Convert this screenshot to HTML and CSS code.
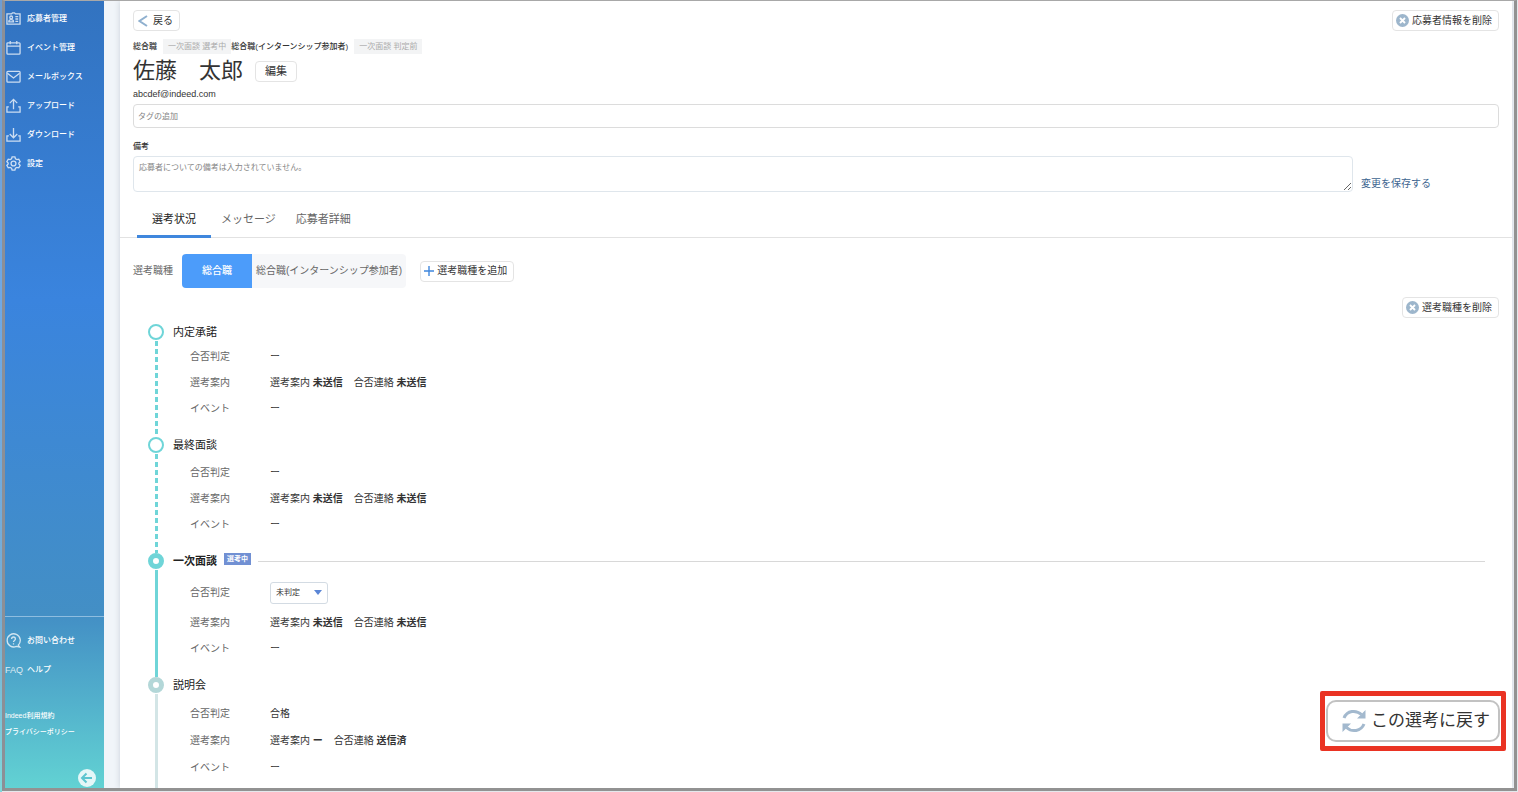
FILE: index.html
```html
<!DOCTYPE html>
<html lang="ja">
<head>
    <meta charset="UTF-8">
    <title>応募者管理</title>
    <link rel="stylesheet" href="styles.css">
</head>
<body>
<div class="app">
    <nav class="sidebar">
        <ul class="menu">
            <li><a href="#">
                <svg class="icon" viewBox="0 0 16 16"><path d="M1 3h5l1-1h2l1 1h5v11H1z"/><circle cx="5.5" cy="6.8" r="1.5"/><path d="M3 11.5c0-3 5-3 5 0zM10 6h3M10 8.5h3M10 11h3"/></svg>
                応募者管理</a></li>
            <li><a href="#">
                <svg class="icon" viewBox="0 0 16 16"><rect x="1" y="3" width="14" height="12" rx="1"/><path d="M1 6.5h14M4.500 1v3.500M11.500 1v3.500"/></svg>
                イベント管理</a></li>
            <li><a href="#">
                <svg class="icon" viewBox="0 0 16 16"><rect x="1" y="2.500" width="14" height="11.500" rx="1"/><path d="M1.500 4.500L8 9.500l6.500-5"/></svg>
                メールボックス</a></li>
            <li><a href="#">
                <svg class="icon" viewBox="0 0 16 16"><path d="M8 12V2M4 5.500L8 1.500l4 4M3 9.500H1V15h14V9.500h-2"/></svg>
                アップロード</a></li>
            <li><a href="#">
                <svg class="icon" viewBox="0 0 16 16"><path d="M8 1v10M4 7.500l4 4 4-4M3 9.500H1V15h14V9.500h-2"/></svg>
                ダウンロード</a></li>
            <li><a href="#">
                <svg class="icon" viewBox="0 0 16 16"><path d="M6.500 1h3l.6 2 1.500.9 2-.5 1.500 2.600L13.700 7.500v1l1.400 1.500-1.500 2.600-2-.5-1.500.9-.6 2h-3l-.6-2-1.500-.9-2 .5L.9 10l1.400-1.500v-1L.9 6l1.500-2.600 2 .5L5.900 3z"/><circle cx="8" cy="8" r="2.600"/></svg>
                設定</a></li>
        </ul>
        <ul class="menu menu_sub">
            <li><a href="#">
                <svg class="icon" viewBox="0 0 16 16"><path d="M13 13a7 7 0 1 0-2 1.300l3.500.7z"/><path d="M6 6.300c0-2.700 4-2.700 4 0C10 8 8 7.800 8 9.700M8 11v1.300"/></svg>
                お問い合わせ</a></li>
            <li><a href="#"><span class="faq">FAQ</span>ヘルプ</a></li>
        </ul>
        <div class="terms">
            <a href="#">Indeed利用規約</a>
            <a href="#">プライバシーポリシー</a>
        </div>
        <button class="fold" type="button" aria-label="メニューを閉じる">
            <svg viewBox="0 0 18 18"><circle cx="9" cy="9" r="9"/><path d="M14 9H4.500M8.500 4.500L4 9l4.500 4.500"/></svg>
        </button>
    </nav>

    <main class="panel">
        <header class="profile">
            <div class="bar">
                <button class="btn" type="button">
                    <svg class="icon_back" viewBox="0 0 10 12"><path d="M9 1L1.500 6 9 11"/></svg>戻る
                </button>
                <button class="btn" type="button">
                    <svg class="icon_del" viewBox="0 0 14 14"><circle cx="7" cy="7" r="7"/><path d="M4.300 4.300l5.400 5.400M9.700 4.300L4.300 9.700"/></svg>応募者情報を削除
                </button>
            </div>
            <div class="jobs">
                <span>総合職</span><span class="state">一次面談 選考中</span><span>総合職(インターンシップ参加者)</span><span class="state">一次面談 判定前</span>
            </div>
            <div class="name">
                <h1>佐藤　太郎</h1>
                <button class="btn btn_edit" type="button">編集</button>
            </div>
            <p class="mail">abcdef@indeed.com</p>
            <input class="tag" type="text" placeholder="タグの追加" aria-label="タグの追加">
            <label class="memo_label" for="memo">備考</label>
            <div class="memo">
                <textarea id="memo" placeholder="応募者についての備考は入力されていません。"></textarea>
                <a href="#">変更を保存する</a>
            </div>
        </header>

        <div class="tabs">
            <a class="on" href="#">選考状況</a>
            <a href="#">メッセージ</a>
            <a href="#">応募者詳細</a>
        </div>

        <div class="kinds">
            <span class="kinds_label">選考職種</span>
            <div class="seg">
                <button class="on" type="button">総合職</button>
                <button type="button">総合職(インターンシップ参加者)</button>
            </div>
            <button class="btn" type="button">
                <svg class="icon_add" viewBox="0 0 10 10"><path d="M5 0v10M0 5h10"/></svg>選考職種を追加
            </button>
        </div>
        <div class="bar bar_del">
            <button class="btn" type="button">
                <svg class="icon_del" viewBox="0 0 14 14"><circle cx="7" cy="7" r="7"/><path d="M4.300 4.300l5.400 5.400M9.700 4.300L4.300 9.700"/></svg>選考職種を削除
            </button>
        </div>

        <ol class="steps">
            <li class="step step_first">
                <div class="track"><i class="dot"></i><i class="line"></i></div>
                <div class="step_body">
                    <h2>内定承諾</h2>
                    <dl>
                        <dt>合否判定</dt><dd>ー</dd>
                        <dt>選考案内</dt><dd><span>選考案内 <b>未送信</b></span><span>合否連絡 <b>未送信</b></span></dd>
                        <dt>イベント</dt><dd>ー</dd>
                    </dl>
                </div>
            </li>
            <li class="step">
                <div class="track"><i class="dot"></i><i class="line"></i></div>
                <div class="step_body">
                    <h2>最終面談</h2>
                    <dl>
                        <dt>合否判定</dt><dd>ー</dd>
                        <dt>選考案内</dt><dd><span>選考案内 <b>未送信</b></span><span>合否連絡 <b>未送信</b></span></dd>
                        <dt>イベント</dt><dd>ー</dd>
                    </dl>
                </div>
            </li>
            <li class="step step_now">
                <div class="track"><i class="dot"></i><i class="line"></i></div>
                <div class="step_body">
                    <h2>一次面談<em>選考中</em></h2>
                    <dl>
                        <dt><label for="judge">合否判定</label></dt>
                        <dd>
                            <div class="select">
                                <select id="judge">
                                    <option>未判定</option>
                                    <option>合格</option>
                                    <option>不合格</option>
                                </select>
                            </div>
                        </dd>
                        <dt>選考案内</dt><dd><span>選考案内 <b>未送信</b></span><span>合否連絡 <b>未送信</b></span></dd>
                        <dt>イベント</dt><dd>ー</dd>
                    </dl>
                </div>
            </li>
            <li class="step step_done">
                <div class="track"><i class="dot"></i><i class="line"></i></div>
                <div class="step_body">
                    <h2>説明会</h2>
                    <dl>
                        <dt>合否判定</dt><dd>合格</dd>
                        <dt>選考案内</dt><dd><span>選考案内 <b>ー</b></span><span>合否連絡 <b>送信済</b></span></dd>
                        <dt>イベント</dt><dd>ー</dd>
                    </dl>
                </div>
                <div class="callout">
                    <button type="button">
                        <svg viewBox="0 0 24 24"><path d="M2 9C5 1.500 14 .5 19.500 5.500M22 15C19 22.500 10 23.500 4.500 18.500"/><path class="head" d="M23.500 1v8.500H15zM.5 23v-8.500H9z"/></svg>この選考に戻す
                    </button>
                </div>
            </li>
        </ol>
    </main>
</div>
</body>
</html>
```
FILE: styles.css
```css
* {
    box-sizing: border-box;
    margin: 0;
    padding: 0;
    list-style: none;
}

body {
    font-family: "Liberation Sans", "Noto Sans CJK JP", sans-serif;
    font-size: 10px;
    line-height: 16px;
    color: #333;
    background: linear-gradient(#6f9dd2, #6fa8e6 38%, #76aed6 78%, #7fd8da) 0 0 / 2px 100% no-repeat, #e4e8ec;
    padding: 0 1px 1px 2px;
}

button, input, select, textarea {
    font: inherit;
    color: inherit;
}

a {
    color: inherit;
    text-decoration: none;
}

svg {
    flex: none;
    fill: none;
    stroke: currentColor;
}

.app {
    display: flex;
    height: calc(100vh - 1px);
    overflow: hidden;
    background: #f1f5f9;
    border: 3px solid #929292;
    border-top: 1px solid #a8a8a8;
    border-left-color: #8c8f96;
}

/* sidebar */
.sidebar {
    display: flex;
    flex-direction: column;
    flex: none;
    width: 99px;
    color: #fff;
    font-size: 8px;
    font-weight: 500;
    background: linear-gradient(#3273c0, #3a84de 38%, #438fc5 78%, #62d2d3);
}

.menu {
    padding-top: 3px;
}

.menu a {
    display: flex;
    align-items: center;
    gap: 6px;
    height: 29px;
}

.icon {
    width: 15px;
    height: 15px;
    margin-left: 1px;
    stroke-width: 1.4;
    opacity: .75;
}

.menu_sub {
    margin-top: auto;
    padding-top: 9px;
    border-top: 1px solid #8ebde0;
}

.faq {
    width: 16px;
    font-size: 9px;
    font-weight: 400;
    opacity: .8;
}

.terms {
    display: flex;
    flex-direction: column;
    padding-top: 24px;
    font-size: 7px;
}

.fold {
    align-self: flex-end;
    width: 18px;
    height: 18px;
    margin: 29px 8px 1px;
    border: none;
    background: none;
}

.fold svg {
    display: block;
    stroke: #5cc5d0;
    stroke-width: 2;
}

.fold circle {
    fill: #e4f7f8;
    stroke: none;
}

/* main panel */
.panel {
    flex: 1;
    min-width: 0;
    margin: 0 2px 0 16px;
    overflow: hidden;
    background: #fff;
    box-shadow: 0 0 6px #c9d0d8;
}

.profile {
    padding: 9px 13px 0;
}

.bar {
    display: flex;
    justify-content: space-between;
}

.btn {
    display: flex;
    align-items: center;
    gap: 3px;
    height: 21px;
    padding: 0 6px 0 3px;
    border: 1px solid #e4e4e4;
    border-radius: 4px;
    background: #fff;
    white-space: nowrap;
}

.icon_back {
    width: 10px;
    height: 12px;
    margin: 0 2px 0 1px;
    stroke: #8fb0cf;
    stroke-width: 2;
}

.icon_del {
    width: 13px;
    height: 13px;
    stroke: #fff;
    stroke-width: 2;
}

.icon_del circle {
    fill: #9db6cc;
    stroke: none;
}

.jobs {
    display: flex;
    align-items: center;
    margin-top: 8px;
    font-size: 8px;
    line-height: 15px;
    font-weight: 500;
}

.state {
    padding: 0 5px;
    margin-left: 6px;
    font-weight: 400;
    color: #aaa;
    background: #f3f4f5;
}

.name {
    display: flex;
    align-items: center;
    gap: 12px;
    margin-top: 1px;
}

.name h1 {
    font-size: 22px;
    line-height: 32px;
    font-weight: 400;
}

.btn_edit {
    padding: 0 9px;
    font-size: 11px;
}

.mail {
    font-size: 9px;
    line-height: 14px;
}

.tag {
    display: block;
    width: 100%;
    height: 24px;
    margin-top: 3px;
    padding: 0 4px;
    font-size: 8px;
    border: 1px solid #dcdcdc;
    border-radius: 4px;
}

.memo_label {
    display: block;
    margin-top: 11px;
    font-size: 8px;
    font-weight: 500;
}

.memo {
    display: flex;
    align-items: flex-end;
    gap: 8px;
}

.memo textarea {
    flex: 1;
    height: 36px;
    margin-top: 1px;
    padding: 3px 5px;
    font-size: 8px;
    border: 1px solid #dfe6ec;
    border-radius: 4px;
}

.memo a {
    margin-right: 68px;
    color: #3d6590;
}

::placeholder {
    color: #858585;
}

.tabs {
    display: flex;
    margin-top: 12px;
    padding-left: 17px;
    border-bottom: 1px solid #e2e2e2;
    font-size: 11px;
    line-height: 31px;
    color: #666;
}

.tabs a {
    padding: 0 10px;
}

.tabs .on {
    padding: 0 15px;
    margin-bottom: -1px;
    border-bottom: 3px solid #3f87dd;
    color: #222;
}

.kinds {
    display: flex;
    align-items: center;
    padding: 16px 13px 0;
}

.kinds_label {
    margin-right: 9px;
    color: #666;
}

.seg {
    display: flex;
    height: 34px;
    margin-right: 14px;
    overflow: hidden;
    border-radius: 4px;
    background: #f6f7f9;
}

.seg button {
    padding: 0 4px;
    border: none;
    background: none;
    color: #666;
}

.seg .on {
    padding: 0 20px;
    background: #4c9cfa;
    color: #fff;
    font-weight: 500;
}

.icon_add {
    width: 10px;
    height: 10px;
    stroke: #3f87dd;
    stroke-width: 1.4;
}

.bar_del {
    justify-content: flex-end;
    padding: 9px 13px 0;
}

/* timeline */
.steps {
    padding: 6px 27px 0 28px;
}

.step {
    display: flex;
    gap: 9px;
    position: relative;
}

.track {
    display: flex;
    flex-direction: column;
    align-items: center;
    width: 16px;
}

.dot {
    width: 16px;
    height: 16px;
    border: 2px solid #6fd5d8;
    border-radius: 50%;
    background: #fff;
}

.line {
    flex: 1;
    width: 3px;
    margin-top: 1px;
    background: repeating-linear-gradient(#6fd5d8 0 5px, transparent 5px 8px);
}

.step_now .dot {
    border-width: 5px;
}

.step_now .line {
    background: #6fd5d8;
}

.step_done .dot {
    border-width: 5px;
    border-color: #b3d7d8;
}

.step_done .line {
    background: #d3e5e6;
}

.step_body {
    flex: 1;
    padding-bottom: 15px;
}

.step h2 {
    display: flex;
    align-items: center;
    font-size: 11px;
    line-height: 16px;
    font-weight: 400;
    color: #222;
}

.step_now h2 {
    font-weight: 700;
}

.step_now h2::after {
    content: "";
    flex: 1;
    height: 1px;
    background: #d8d8d8;
}

.step em {
    align-self: flex-start;
    margin: 0 7px;
    padding: 0 3px;
    font-size: 7px;
    line-height: 12px;
    font-style: normal;
    color: #fff;
    background: #7190d3;
}

.step dl {
    display: grid;
    grid-template-columns: 80px 1fr;
    grid-auto-rows: minmax(26px, auto);
    align-items: center;
    padding: 7px 0 0 17px;
}

.step_first dl {
    padding-top: 4px;
}

.step_done dl {
    grid-auto-rows: minmax(27px, auto);
}

.step dt {
    color: #666;
}

.step dd {
    display: flex;
    gap: 11px;
}

.select {
    position: relative;
    margin: 6px 0;
}

.select select {
    display: block;
    width: 58px;
    height: 22px;
    padding: 0 5px;
    font-size: 8px;
    appearance: none;
    border: 1px solid #d3dbe3;
    border-radius: 3px;
    background: #fff;
}

.select::after {
    content: "";
    position: absolute;
    top: 8px;
    right: 6px;
    border: 4px solid transparent;
    border-top: 5px solid #5b86d6;
    border-bottom: none;
    pointer-events: none;
}

/* highlighted button over the last step */
.callout {
    position: absolute;
    top: 14px;
    right: -21px;
    padding: 4px 1px;
    border: 5px solid #ea3323;
    border-radius: 2px;
    background: #fff;
}

.callout button {
    display: flex;
    align-items: center;
    gap: 5px;
    height: 42px;
    padding: 0 8px 0 14px;
    font-size: 17px;
    border: 2px solid #c2c2c2;
    border-radius: 10px;
    background: #fff;
}

.callout svg {
    width: 24px;
    height: 24px;
    stroke: #a3b9ce;
    stroke-width: 3;
}

.callout .head {
    fill: #a3b9ce;
    stroke: none;
}
```
